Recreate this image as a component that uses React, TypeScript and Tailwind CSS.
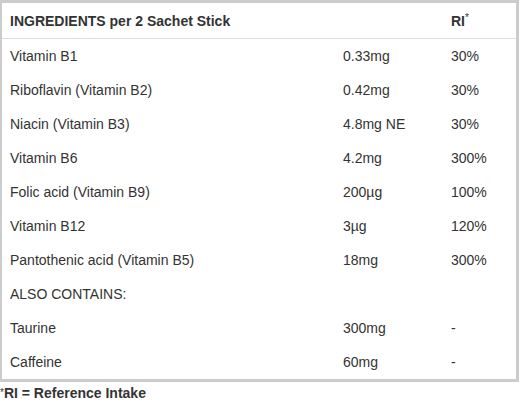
const rows: [string, string, string][] = [
  ["Vitamin B1", "0.33mg", "30%"],
  ["Riboflavin (Vitamin B2)", "0.42mg", "30%"],
  ["Niacin (Vitamin B3)", "4.8mg NE", "30%"],
  ["Vitamin B6", "4.2mg", "300%"],
  ["Folic acid (Vitamin B9)", "200µg", "100%"],
  ["Vitamin B12", "3µg", "120%"],
  ["Pantothenic acid (Vitamin B5)", "18mg", "300%"],
  ["ALSO CONTAINS:", "", ""],
  ["Taurine", "300mg", "-"],
  ["Caffeine", "60mg", "-"],
];

export default function App() {
  return (
    <div className="w-[522px] h-[405px] bg-white text-[14px] text-[#333] font-['Liberation_Sans',Arial,sans-serif]">
      <div className="w-[519px] border-[#cccccc] border-t-[3px] border-l-2 border-r-[3px] border-b-[3px]">
        {/* header */}
        <div className="grid grid-cols-[333px_108px_1fr] h-[36px] pt-[2px] items-center border-b border-[#dddddd] font-bold">
          <div className="pl-2">INGREDIENTS per 2 Sachet Stick</div>
          <div />
          <div className="pl-2">
            RI<span className="text-[10px] font-normal align-top relative -top-[1px]">*</span>
          </div>
        </div>
        {rows.map(([name, amount, ri]) => (
          <div key={name} className="grid grid-cols-[333px_108px_1fr] h-[34px] pt-[1px] items-center">
            <div className="pl-2">{name}</div>
            <div className="pl-2">{amount}</div>
            <div className="pl-2">{ri}</div>
          </div>
        ))}
      </div>
      <div className="mt-[2px] font-bold leading-[18px]">
        <span className="text-[10px] font-normal align-top">*</span>RI = Reference Intake
      </div>
    </div>
  );
}
